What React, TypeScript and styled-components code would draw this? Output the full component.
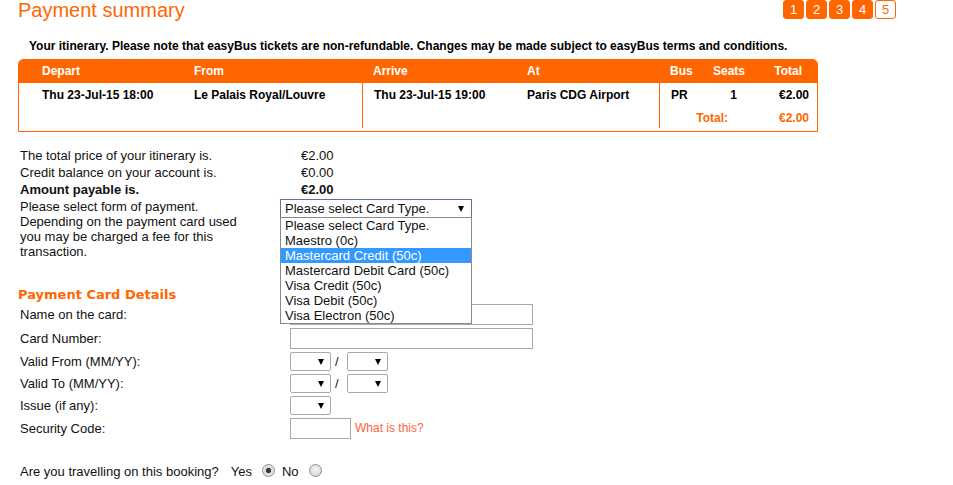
import React from "react";
import styled, { createGlobalStyle } from "styled-components";

const ORANGE = "#ff6600";
const COLS = "175px 168px 165px 132px 54px 45px 59px";

const GlobalStyle = createGlobalStyle`
  html, body { margin: 0; padding: 0; background: #fff; }
  body { font-family: "Liberation Sans", Arial, sans-serif; color: #000; }
  * { box-sizing: border-box; }
`;

const Page = styled.div`
  width: 953px;
  height: 485px;
  overflow: hidden;
  padding-left: 18px;
`;

const Header = styled.header`
  display: flex;
  justify-content: space-between;
  align-items: flex-start;
  width: 878px;
`;

const Title = styled.h1`
  margin: 0;
  font-size: 20px;
  line-height: 20px;
  font-weight: normal;
  color: ${ORANGE};
`;

const Steps = styled.ol`
  display: flex;
  gap: 2px;
  margin: 0;
  padding: 0;
  list-style: none;
`;

const Step = styled.li<{ $current?: boolean }>`
  width: 21px;
  height: 19px;
  border-radius: 3px;
  border: 1px solid ${ORANGE};
  background: ${(p) => (p.$current ? "#fff" : ORANGE)};
  color: ${(p) => (p.$current ? ORANGE : "#fff")};
  font-size: 13px;
  line-height: 17px;
  text-align: center;
`;

const Note = styled.p`
  margin: 19px 0 6px 11px;
  font-size: 12px;
  font-weight: bold;
  line-height: 14px;
`;

const Itinerary = styled.div`
  width: 800px;
  border: 1px solid ${ORANGE};
  border-radius: 5px 5px 0 0;
  overflow: hidden;
  font-size: 12px;
  font-weight: bold;
`;

const HeadRow = styled.div`
  display: grid;
  grid-template-columns: ${COLS};
  height: 23px;
  padding-bottom: 2px;
  background: ${ORANGE};
  color: #fff;
`;

const BodyRow = styled.div<{ $pb?: number }>`
  display: grid;
  grid-template-columns: ${COLS};
  height: 24px;
  padding-bottom: ${(p) => p.$pb ?? 0}px;
`;

const Cell = styled.div<{
  $pl?: number;
  $pr?: number;
  $end?: boolean;
  $divider?: boolean;
  $span?: number;
  $accent?: boolean;
}>`
  display: flex;
  align-items: center;
  justify-content: ${(p) => (p.$end ? "flex-end" : "flex-start")};
  padding-left: ${(p) => p.$pl ?? 0}px;
  padding-right: ${(p) => p.$pr ?? 0}px;
  grid-column: span ${(p) => p.$span ?? 1};
  border-left: ${(p) => (p.$divider ? `1px solid ${ORANGE}` : "none")};
  color: ${(p) => (p.$accent ? ORANGE : "inherit")};
  white-space: nowrap;
`;

const Summary = styled.div`
  display: grid;
  grid-template-columns: 260px auto;
  row-gap: 2px;
  margin: 16px 0 0 2px;
  font-size: 13px;
  line-height: 15px;
  color: #111;
`;

const Label = styled.div<{ $strong?: boolean; $wrap?: number }>`
  font-weight: ${(p) => (p.$strong ? "bold" : "normal")};
  max-width: ${(p) => (p.$wrap ? `${p.$wrap}px` : "none")};
`;

const Value = styled.div<{ $strong?: boolean }>`
  padding-left: 21px;
  font-weight: ${(p) => (p.$strong ? "bold" : "normal")};
`;

const SelectSlot = styled.div`
  position: relative;
  align-self: start;
`;

const CardSelect = styled.div`
  width: 192px;
  height: 19px;
  border: 1px solid #5f7299;
  display: flex;
  align-items: center;
  justify-content: space-between;
  padding: 0 7px 0 4px;
  font-size: 13px;
  line-height: 15px;
  background: #fff;
`;

const Arrow = styled.span`
  width: 0;
  height: 0;
  border-left: 3.5px solid transparent;
  border-right: 3.5px solid transparent;
  border-top: 6px solid #000;
`;

const OptionList = styled.ul`
  position: absolute;
  top: 18px;
  left: 0;
  z-index: 2;
  width: 192px;
  margin: 0;
  padding: 0;
  list-style: none;
  border: 1px solid #8a8a8a;
  background: #fff;
  font-size: 13px;
`;

const OptionItem = styled.li<{ $active?: boolean }>`
  height: 15px;
  line-height: 15px;
  padding-left: 4px;
  white-space: nowrap;
  background: ${(p) => (p.$active ? "#3399ff" : "transparent")};
  color: ${(p) => (p.$active ? "#fff" : "#111")};
`;

const SectionTitle = styled.h2`
  margin: 28px 0 0 0;
  font-family: "DejaVu Sans", Verdana, sans-serif;
  font-size: 13px;
  line-height: 15px;
  font-weight: bold;
  color: ${ORANGE};
`;

const CardForm = styled.div`
  display: grid;
  grid-template-columns: 270px auto;
  row-gap: 3px;
  align-items: center;
  margin: 2px 0 0 2px;
  font-size: 13px;
  line-height: 15px;
  color: #111;
`;

const Controls = styled.div`
  display: flex;
  align-items: center;
`;

const TextBox = styled.input<{ $w: number }>`
  width: ${(p) => p.$w}px;
  height: 21px;
  margin: 0;
  padding: 0 3px;
  border: 1px solid #a9a9a9;
  font: 13px "Liberation Sans", Arial, sans-serif;
  outline: none;
`;

const SmallSelect = styled.div`
  width: 41px;
  height: 19px;
  border: 1px solid #a9a9a9;
  border-radius: 2px;
  display: flex;
  align-items: center;
  justify-content: flex-end;
  padding-right: 6px;
  background: #fff;
`;

const Slash = styled.span`
  margin: 0 8px 0 4px;
`;

const HelpLink = styled.a`
  margin-left: 4px;
  font-size: 12px;
  color: #f8663c;
  text-decoration: none;
`;

const Question = styled.div`
  display: flex;
  align-items: center;
  margin: 25px 0 0 2px;
  font-size: 13px;
  line-height: 15px;
  color: #111;
`;

const QuestionText = styled.span`
  margin-right: 12px;
`;

const RadioOption = styled.label`
  display: inline-flex;
  align-items: center;
  gap: 10px;
  margin-right: 7px;
`;

const Radio = styled.input`
  appearance: none;
  -webkit-appearance: none;
  width: 13px;
  height: 13px;
  margin: -2px 0 0 0;
  border: 1px solid #8e8e8e;
  border-radius: 50%;
  background: radial-gradient(circle at 50% 40%, #f4f4f4 0, #dcdcdc 70%);
  &:checked {
    background: radial-gradient(circle, #3a3a3a 0 2.2px, #d8d8d8 3px, #efefef 6.5px);
  }
`;

type Col = { text: string; pl?: number; pr?: number; end?: boolean; divider?: boolean; span?: number; accent?: boolean };

const head: Col[] = [
  { text: "Depart", pl: 23 },
  { text: "From" },
  { text: "Arrive", pl: 11 },
  { text: "At" },
  { text: "Bus", pl: 11 },
  { text: "Seats" },
  { text: "Total", end: true, pr: 15 },
];

const rows: { pb?: number; cells: Col[] }[] = [
  {
    cells: [
      { text: "Thu 23-Jul-15 18:00", pl: 23 },
      { text: "Le Palais Royal/Louvre" },
      { text: "Thu 23-Jul-15 19:00", pl: 11, divider: true },
      { text: "Paris CDG Airport" },
      { text: "PR", pl: 11, divider: true },
      { text: "1", end: true, pr: 21 },
      { text: "€2.00", end: true, pr: 8 },
    ],
  },
  {
    pb: 3,
    cells: [
      { text: "" },
      { text: "" },
      { text: "", divider: true },
      { text: "" },
      { text: "Total:", divider: true, span: 2, end: true, pr: 30, accent: true },
      { text: "€2.00", end: true, pr: 8, accent: true },
    ],
  },
];

const cardTypes = [
  "Please select Card Type.",
  "Maestro (0c)",
  "Mastercard Credit (50c)",
  "Mastercard Debit Card (50c)",
  "Visa Credit (50c)",
  "Visa Debit (50c)",
  "Visa Electron (50c)",
];

const renderCell = (c: Col, i: number) => (
  <Cell key={i} $pl={c.pl} $pr={c.pr} $end={c.end} $divider={c.divider} $span={c.span} $accent={c.accent}>
    {c.text}
  </Cell>
);

export default function App() {
  return (
    <>
      <GlobalStyle />
      <Page>
        <Header>
          <Title>Payment summary</Title>
          <Steps>
            {[1, 2, 3, 4, 5].map((n) => (
              <Step key={n} $current={n === 5}>
                {n}
              </Step>
            ))}
          </Steps>
        </Header>

        <Note>
          Your itinerary. Please note that easyBus tickets are non-refundable. Changes may be made subject to easyBus
          terms and conditions.
        </Note>

        <Itinerary>
          <HeadRow>{head.map(renderCell)}</HeadRow>
          {rows.map((r, i) => (
            <BodyRow key={i} $pb={r.pb}>
              {r.cells.map(renderCell)}
            </BodyRow>
          ))}
        </Itinerary>

        <Summary>
          <Label>The total price of your itinerary is.</Label>
          <Value>€2.00</Value>
          <Label>Credit balance on your account is.</Label>
          <Value>€0.00</Value>
          <Label $strong>Amount payable is.</Label>
          <Value $strong>€2.00</Value>
          <Label $wrap={228}>
            Please select form of payment.
            <br />
            Depending on the payment card used you may be charged a fee for this transaction.
          </Label>
          <SelectSlot>
            <CardSelect>
              <span>Please select Card Type.</span>
              <Arrow />
            </CardSelect>
            <OptionList>
              {cardTypes.map((t, i) => (
                <OptionItem key={t} $active={i === 2}>
                  {t}
                </OptionItem>
              ))}
            </OptionList>
          </SelectSlot>
        </Summary>

        <SectionTitle>Payment Card Details</SectionTitle>

        <CardForm>
          <Label>Name on the card:</Label>
          <Controls>
            <TextBox $w={243} />
          </Controls>
          <Label>Card Number:</Label>
          <Controls>
            <TextBox $w={243} />
          </Controls>
          <Label>Valid From (MM/YY):</Label>
          <Controls>
            <SmallSelect>
              <Arrow />
            </SmallSelect>
            <Slash>/</Slash>
            <SmallSelect>
              <Arrow />
            </SmallSelect>
          </Controls>
          <Label>Valid To (MM/YY):</Label>
          <Controls>
            <SmallSelect>
              <Arrow />
            </SmallSelect>
            <Slash>/</Slash>
            <SmallSelect>
              <Arrow />
            </SmallSelect>
          </Controls>
          <Label>Issue (if any):</Label>
          <Controls>
            <SmallSelect>
              <Arrow />
            </SmallSelect>
          </Controls>
          <Label>Security Code:</Label>
          <Controls>
            <TextBox $w={61} />
            <HelpLink href="#">What is this?</HelpLink>
          </Controls>
        </CardForm>

        <Question>
          <QuestionText>Are you travelling on this booking?</QuestionText>
          <RadioOption>
            Yes
            <Radio type="radio" name="travelling" defaultChecked />
          </RadioOption>
          <RadioOption>
            No
            <Radio type="radio" name="travelling" />
          </RadioOption>
        </Question>
      </Page>
    </>
  );
}
